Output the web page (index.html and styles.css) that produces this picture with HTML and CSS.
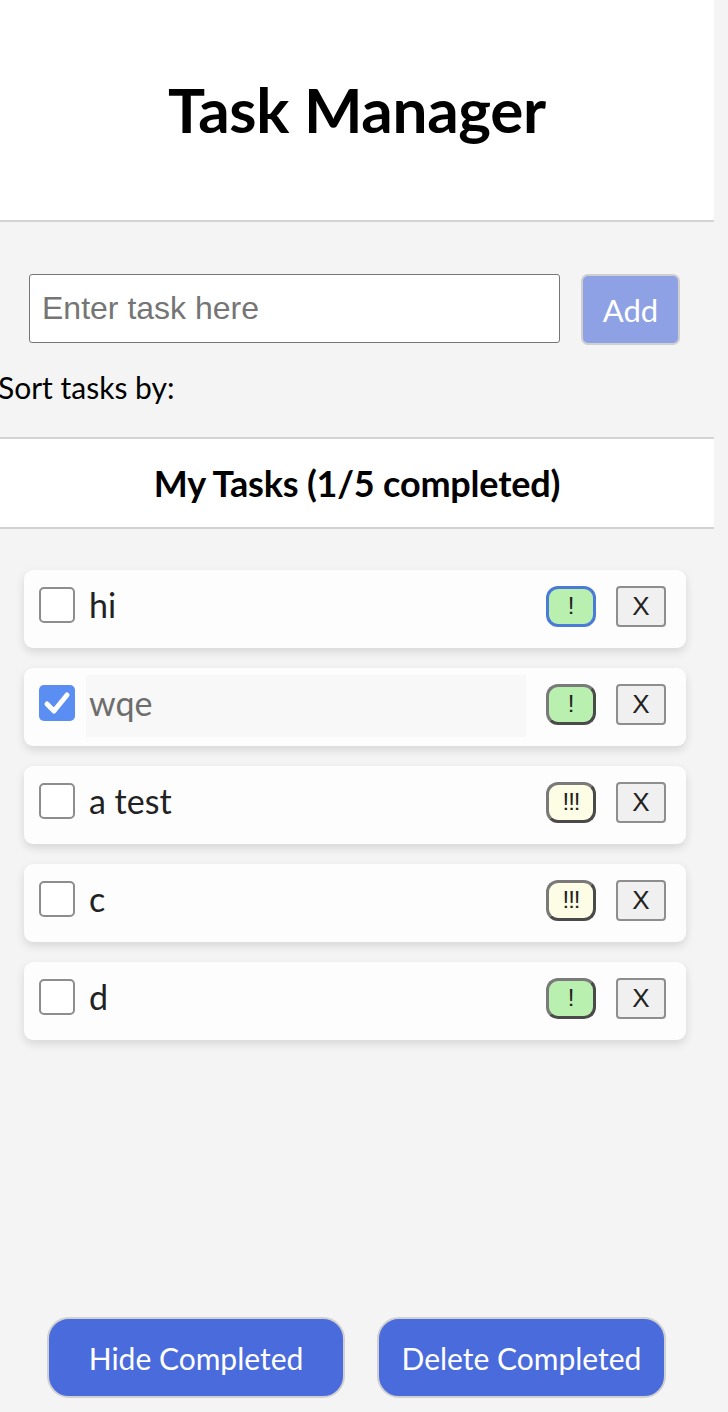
FILE: index.html
```html
<!DOCTYPE html>
<html>
<head>
<meta charset="utf-8">
<link rel="stylesheet" href="styles.css">
</head>
<body>
<div class="app">
  <header class="top">
    <h1 class="title">Task Manager</h1>
  </header>
  <div class="add-row">
    <input class="task-input" type="text" placeholder="Enter task here">
    <button class="add-btn">Add</button>
  </div>
  <div class="sort">Sort tasks by:</div>
  <div class="list-head">My Tasks (1/5 completed)</div>
  <ul class="tasks">
    <li class="task">
      <span class="check"></span>
      <span class="text">hi</span>
      <button class="prio low focus">!</button>
      <button class="del">X</button>
    </li>
    <li class="task">
      <span class="check on"><svg viewBox="0 0 36 36" width="36" height="36"><path d="M8 19 L15 26 L28 10" fill="none" stroke="#fff" stroke-width="5" stroke-linecap="round" stroke-linejoin="round"/></svg></span>
      <span class="text done">wqe</span>
      <button class="prio low">!</button>
      <button class="del">X</button>
    </li>
    <li class="task">
      <span class="check"></span>
      <span class="text">a test</span>
      <button class="prio high">!!!</button>
      <button class="del">X</button>
    </li>
    <li class="task">
      <span class="check"></span>
      <span class="text">c</span>
      <button class="prio high">!!!</button>
      <button class="del">X</button>
    </li>
    <li class="task">
      <span class="check"></span>
      <span class="text">d</span>
      <button class="prio low">!</button>
      <button class="del">X</button>
    </li>
  </ul>
  <div class="actions">
    <button class="action hide">Hide Completed</button>
    <button class="action delete">Delete Completed</button>
  </div>
</div>
</body>
</html>
```

FILE: styles.css
```css
html, body {
  margin: 0;
  padding: 0;
}
body {
  width: 728px;
  height: 1412px;
  overflow: hidden;
  background: #f4f4f4;
  font-family: "Lato", "Liberation Sans", sans-serif;
  color: #000;
}
.app {
  width: 714px;
  height: 1412px;
  display: flex;
  flex-direction: column;
}
.top {
  height: 220px;
  background: #fff;
  border-bottom: 2px solid #d3d3d3;
  display: flex;
  align-items: center;
  justify-content: center;
}
.title {
  margin: 0;
  font-size: 62px;
  font-weight: 700;
  letter-spacing: -0.3px;
  padding-bottom: 2px;
}
.add-row {
  display: flex;
  align-items: flex-start;
  gap: 21px;
  padding: 52px 0 0 29px;
}
.task-input {
  box-sizing: border-box;
  width: 531px;
  height: 69px;
  border: 1px solid #767676;
  border-radius: 3px;
  padding: 0 12px;
  font-family: "Liberation Sans", Arial, sans-serif;
  font-size: 32px;
  background: #fff;
}
.task-input::placeholder {
  color: #757575;
}
.add-btn {
  box-sizing: border-box;
  width: 99px;
  height: 71px;
  background: #8ea1e5;
  border: 2px solid #cfcfcf;
  border-radius: 7px;
  color: #fff;
  font-family: "Lato", sans-serif;
  font-size: 31px;
  padding: 0;
}
.sort {
  margin: 22px 0 0 -2px;
  font-size: 30px;
  height: 40px;
  line-height: 40px;
}
.list-head {
  margin-top: 30px;
  height: 88px;
  background: #fff;
  border-top: 2px solid #d3d3d3;
  border-bottom: 2px solid #d3d3d3;
  display: flex;
  align-items: center;
  justify-content: center;
  font-size: 36px;
  font-weight: 700;
  letter-spacing: -0.2px;
}
.tasks {
  list-style: none;
  margin: 0;
  padding: 41px 28px 0 24px;
  display: flex;
  flex-direction: column;
  gap: 20px;
}
.task {
  height: 78px;
  background: #fdfdfd;
  border-radius: 9px;
  box-shadow: 0 4px 10px rgba(0, 0, 0, 0.12);
  display: flex;
  align-items: center;
  padding: 0 20px 0 15px;
}
.check {
  box-sizing: border-box;
  width: 36px;
  height: 36px;
  border: 2px solid #8d8d8d;
  border-radius: 5px;
  background: #fff;
  flex: none;
  margin-top: -8px;
}
.check.on {
  background: #5b8ef2;
  border: none;
}
.check.on svg {
  display: block;
}
.text {
  flex: 1;
  margin-left: 11px;
  margin-right: 20px;
  font-size: 34px;
  color: #222;
  height: 62px;
  line-height: 56px;
  padding-left: 3px;
  margin-top: -3px;
}
.text.done {
  background: #f8f8f8;
  color: #6e6e6e;
}
.prio {
  box-sizing: border-box;
  width: 50px;
  height: 41px;
  border-radius: 12px;
  border: 3px solid;
  border-color: #7a7a7a #4a4a4a #4a4a4a #7a7a7a;
  font-family: "Liberation Sans", Arial, sans-serif;
  font-size: 24px;
  color: #222;
  padding: 0;
  margin-top: -6px;
  flex: none;
}
.prio.low {
  background: #b9f0b0;
}
.prio.high {
  background: #fdfde6;
  letter-spacing: -1px;
}
.prio.focus {
  border-color: #4a7bd6;
}
.del {
  box-sizing: border-box;
  width: 50px;
  height: 41px;
  margin-left: 20px;
  background: #f0f0f0;
  border: 2px solid #8e8e8e;
  border-radius: 4px;
  font-family: "Liberation Sans", Arial, sans-serif;
  font-size: 26px;
  color: #222;
  padding: 0;
  margin-top: -6px;
  flex: none;
}
.actions {
  margin-top: auto;
  padding: 0 0 14px 47px;
  display: flex;
  gap: 32px;
}
.action {
  box-sizing: border-box;
  height: 81px;
  background: #4a6bdc;
  border: 2px solid #d0d0d0;
  border-radius: 22px;
  color: #fff;
  font-family: "Lato", sans-serif;
  font-size: 30px;
  padding: 0;
}
.hide {
  width: 298px;
}
.delete {
  width: 289px;
}
```
